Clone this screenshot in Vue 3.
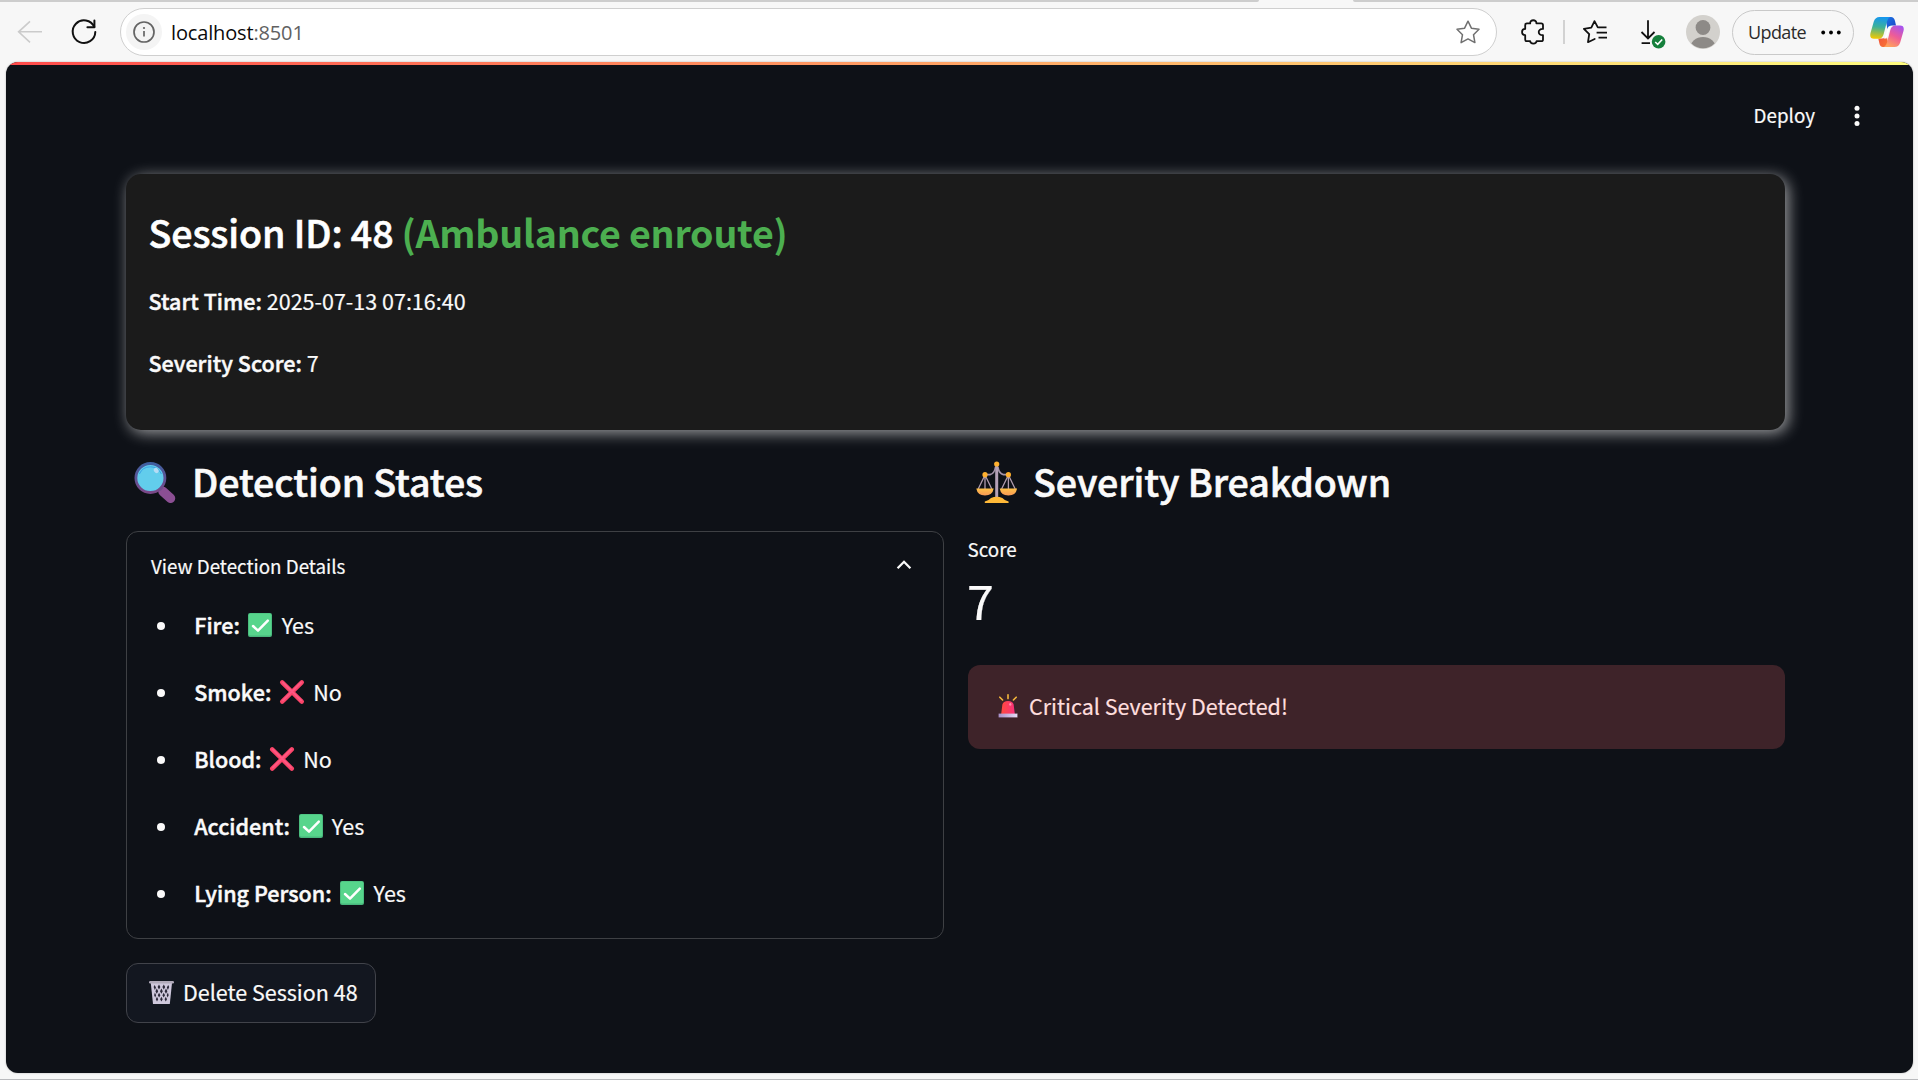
<script setup>
const detections = [
  { label: 'Fire', active: true },
  { label: 'Smoke', active: false },
  { label: 'Blood', active: false },
  { label: 'Accident', active: true },
  { label: 'Lying Person', active: true }
]
</script>

<template>
  <div class="browser">
    <header class="toolbar">
      <div class="tab-edge"><i class="edge left"></i><i class="edge right"></i></div>
      <div class="tools">
        <svg class="ico back" viewBox="0 0 36 36"><path d="M18 7.4 6.6 17.8 18 28.3M6.6 17.8H30" fill="none" stroke="#cbcbcb" stroke-width="1.6" /></svg>
        <svg class="ico reload" viewBox="0 0 36 36"><path d="M28.3 13A11.3 11.3 0 1 0 29.3 18" fill="none" stroke="#111" stroke-width="2" stroke-linecap="round" /><path d="M28.4 6.6v6.6h-7" fill="none" stroke="#111" stroke-width="2" stroke-linecap="round" stroke-linejoin="round" /></svg>
        <div class="address">
          <span class="info">
            <svg width="24" height="24" viewBox="0 0 24 24"><circle cx="12" cy="12" r="10" fill="none" stroke="#646464" stroke-width="1.7" /><path d="M12 11v5.6" stroke="#646464" stroke-width="1.7" /><circle cx="12" cy="8" r="1.1" fill="#646464" /></svg>
          </span>
          <span class="url">localhost<span class="port">:8501</span></span>
          <svg class="ico star" viewBox="0 0 36 36"><path d="M18 7.2 21.4 14.2 29 15.3 23.5 20.7 24.9 28.6 18 24.9 11.1 28.6 12.5 20.7 7 15.3 14.6 14.2Z" fill="none" stroke="#707070" stroke-width="1.5" stroke-linejoin="round" /></svg>
        </div>
        <svg class="ico puzzle" viewBox="0 0 36 36"><path d="M12 9.4H15.2C14.8 5.2 21.7 5.2 21.4 9.4H26.2Q28 9.4 28 11.2V14.9C22.3 14.6 22.3 21.6 28 21.2V25.4Q28 27.2 26.2 27.2H21.6C21.3 30.3 15.4 30.3 15.2 27.2H12Q10.2 27.2 10.2 25.4V21.2C6 21.2 6 14.9 10.2 14.9V11.2Q10.2 9.4 12 9.4Z" fill="none" stroke="#111" stroke-width="1.8" stroke-linejoin="round" /></svg>
        <i class="rule"></i>
        <svg class="ico favs" viewBox="0 0 36 36"><path d="M21.6 13.4H20.8L17.5 7.1 14.3 13.7 6.9 14.9 12.2 20.2 11 28.2 17.7 25" fill="none" stroke="#111" stroke-width="1.8" stroke-linejoin="round" stroke-linecap="round" /><path d="M22 13.4H29.5M19.6 18.6H30M21.5 23.6H30" fill="none" stroke="#111" stroke-width="1.8" /></svg>
        <svg class="ico down" viewBox="0 0 36 36"><path d="M16 6.2V24.2M9.5 18 16 24.4 22.5 18M9.6 29.2H18" fill="none" stroke="#111" stroke-width="1.8" /><circle cx="26.6" cy="27.8" r="6.8" fill="#15803c" /><path d="M23.2 28 25.7 30.3 30.2 25.5" fill="none" stroke="#fff" stroke-width="1.6" /></svg>
        <svg class="avatar" viewBox="0 0 34 34"><defs><clipPath id="avatar-disc"><circle cx="17" cy="17" r="16.3" /></clipPath></defs><circle cx="17" cy="17" r="17" fill="#d3d1cd" /><circle cx="17" cy="12.5" r="7.4" fill="#8d8a87" /><ellipse cx="17" cy="33" rx="12.8" ry="11" fill="#8d8a87" clip-path="url(#avatar-disc)" /></svg>
        <div class="update">
          <span>Update</span>
          <svg width="20" height="5" viewBox="0 0 20 5"><circle cx="2.2" cy="2.5" r="1.9" /><circle cx="10" cy="2.5" r="1.9" /><circle cx="17.8" cy="2.5" r="1.9" /></svg>
        </div>
        <svg class="copilot" viewBox="0 0 34 32">
          <defs>
            <linearGradient id="cp-a" x1=".4" y1="0" x2=".3" y2="1"><stop offset="0" stop-color="#1697ee" /><stop offset=".45" stop-color="#3bb19a" /><stop offset="1" stop-color="#f4c900" /></linearGradient>
            <linearGradient id="cp-b" x1=".8" y1="0" x2=".3" y2="1"><stop offset="0" stop-color="#a653ef" /><stop offset=".5" stop-color="#ee5c97" /><stop offset="1" stop-color="#ffa35c" /></linearGradient>
            <linearGradient id="cp-c" x1="0" y1="0" x2="1" y2="1"><stop offset="0" stop-color="#1c7ce8" /><stop offset="1" stop-color="#1a3fc4" /></linearGradient>
            <linearGradient id="cp-d" x1="0" y1="0" x2="1" y2="1"><stop offset="0" stop-color="#f0503c" /><stop offset="1" stop-color="#fa7a35" /></linearGradient>
          </defs>
          <path d="M15 1H21Q24 1 25 5L26 9.5H22Q18.5 9.5 17.5 13Z" fill="url(#cp-c)" />
          <path d="M19 31H13Q10 31 9.3 27L8.3 22.5H12Q15.5 22.5 16.5 19Z" fill="url(#cp-d)" />
          <path d="M9.5 1H20Q17.8 2 16.8 6L13.7 18Q12.6 22.7 8.5 22.7H4Q-.8 22.7 .5 17L3.8 5.5Q5.3 1 9.5 1Z" fill="url(#cp-a)" />
          <path d="M24.5 31H14Q16.2 30 17.2 26L20.3 14Q21.4 9.5 25.5 9.5H30Q34.8 9.5 33.5 15L30.2 26.5Q28.7 31 24.5 31Z" fill="url(#cp-b)" />
          <path d="M18.6 10.5H20.8Q19.8 11.5 19.2 14L16.6 22.5H13.8Q15 21 15.6 19Z" fill="#fff" />
        </svg>
      </div>
    </header>

    <main class="app">
      <div class="decoration"></div>
      <div class="app-header">
        <span class="deploy">Deploy</span>
        <svg width="24" height="24" viewBox="0 0 24 24" fill="#fafafa"><circle cx="12" cy="4.3" r="2.5" /><circle cx="12" cy="12" r="2.5" /><circle cx="12" cy="19.6" r="2.5" /></svg>
      </div>

      <div class="content">
        <section class="session">
          <h2><span class="sid">Session ID: 48</span><span class="status">(Ambulance enroute)</span></h2>
          <p><strong>Start Time:</strong> 2025-07-13 07:16:40</p>
          <p><strong>Severity Score:</strong> 7</p>
        </section>

        <div class="columns">
          <section class="col">
            <h2>
              <svg class="glass" width="42" height="42" viewBox="0 0 42 42">
                <defs><linearGradient id="rim" x1="0" y1="0" x2="0" y2="1"><stop offset="0" stop-color="#3f5fa0" /><stop offset="1" stop-color="#7a4888" /></linearGradient></defs>
                <path d="M29 30.5 36.5 37.3" stroke="#8b4f93" stroke-width="9.5" stroke-linecap="round" />
                <path d="M25 25.5 28 28.5" stroke="#73508c" stroke-width="4" />
                <circle cx="16.4" cy="17" r="14.5" fill="#62cdec" stroke="url(#rim)" stroke-width="2.8" />
                <path d="M5.4 13A12 12 0 0 1 27.4 13" fill="none" stroke="#3aa3e6" stroke-width="1" />
                <ellipse cx="22.2" cy="9.5" rx="2.2" ry="2.8" fill="#b5dcf4" transform="rotate(-35 22.2 9.5)" />
              </svg>
              <span>Detection States</span>
            </h2>
            <div class="expander">
              <div class="summary">
                <span>View Detection Details</span>
                <svg width="16" height="12" viewBox="0 0 16 12"><path d="M1.6 9.2 8 2.8 14.4 9.2" fill="none" stroke="#fafafa" stroke-width="2.3" /></svg>
              </div>
              <ul>
                <li v-for="d in detections" :key="d.label">
                  <i class="bullet"></i>
                  <strong>{{ d.label }}:</strong>
                  <svg v-if="d.active" class="mark" viewBox="0 0 24 24"><rect width="24" height="24" rx="2" fill="#48b67c" /><rect x=".8" y=".6" width="22.4" height="22" rx="1.6" fill="#57d58c" /><path d="M5 13 10 17.6 19.8 7.6" fill="none" stroke="#fff" stroke-width="2.5" stroke-linecap="round" stroke-linejoin="round" /></svg>
                  <svg v-else class="mark" viewBox="0 0 24 24"><path d="M2.2 2.4 21.8 21.6M21.8 2.4 2.2 21.6" stroke="#fb4468" stroke-width="4.4" stroke-linecap="round" /><path d="M3 2.6 21 20.4M21 2.6 3 20.4" stroke="#ff5683" stroke-width="2" stroke-linecap="round" /></svg>
                  <span>{{ d.active ? 'Yes' : 'No' }}</span>
                </li>
              </ul>
            </div>
            <button class="delete" type="button">
              <svg width="25" height="25" viewBox="0 0 25 25">
                <path d="M1.8 3H23L20.8 24H4Z" fill="#cfc8dc" />
                <g fill="#2b2838">
                  <path d="M5.6 5 7 7.6 5.9 10 4.6 7ZM10 4.6 11.4 7 10 9.4 8.6 7ZM14.8 4.6 16.2 7 14.8 9.4 13.4 7ZM19.2 5 20.2 7 18.9 10 17.8 7.6Z" />
                  <path d="M7.8 8.6 9.2 11.2 7.8 13.8 6.4 11.2ZM12.4 8.6 13.8 11.2 12.4 13.8 11 11.2ZM17 8.6 18.4 11.2 17 13.8 15.6 11.2Z" />
                  <path d="M5.9 12.6 7.1 15.2 6.2 17.6 5.1 15.2ZM10.1 12.8 11.4 15.2 10.1 17.6 8.8 15.2ZM14.7 12.8 16 15.2 14.7 17.6 13.4 15.2ZM18.9 12.6 19.7 15.2 18.6 17.6 17.7 15.2Z" />
                  <path d="M8 16.8 9.2 19.2 8 21.6 6.8 19.2ZM12.4 16.8 13.7 19.2 12.4 21.6 11.1 19.2ZM16.8 16.8 18 19.2 16.8 21.6 15.6 19.2Z" />
                </g>
                <path d="M1.2 2.2H23.8" stroke="#b1aaba" stroke-width="2.4" stroke-linecap="round" />
              </svg>
              <span>Delete Session 48</span>
            </button>
          </section>

          <section class="col">
            <h2>
              <svg class="scales" width="42" height="43" viewBox="0 0 42 43">
                <defs><linearGradient id="pan" x1="0" y1="0" x2="0" y2="1"><stop offset="0" stop-color="#ffc247" /><stop offset="1" stop-color="#f99a55" /></linearGradient></defs>
                <path d="M9 14 2.2 28M9 14V28M9 14 15.8 28M32.4 14 25.6 28M32.4 14V28M32.4 14 39.2 28" fill="none" stroke="#b09cae" stroke-width="1.3" />
                <path d="M9 13.6H14Q18.5 12.5 19.4 6.5H22Q23 12.5 27.4 13.6H32.4" fill="none" stroke="#a392a8" stroke-width="1.6" />
                <path d="M20.7 4V37" stroke="#b5a1b7" stroke-width="3" />
                <path d="M.3 27.4H17.7Q16.5 34.4 9 34.4T.3 27.4ZM23.7 27.4H41.1Q40 34.4 32.4 34.4T23.7 27.4Z" fill="url(#pan)" />
                <path d="M8.8 42V40.4Q13 39.5 15 37Q20.7 34.5 26.4 37Q28.4 39.5 32.6 40.4V42Z" fill="#ffb938" />
                <circle cx="20.7" cy="3" r="2.6" fill="#ffb02e" /><circle cx="9" cy="13.7" r="2.6" fill="#ffb02e" /><circle cx="32.4" cy="13.7" r="2.6" fill="#ffb02e" />
              </svg>
              <span>Severity Breakdown</span>
            </h2>
            <div class="metric-label">Score</div>
            <div class="metric-value">7</div>
            <div class="alert">
              <svg width="20" height="24" viewBox="0 0 20 24">
                <defs><linearGradient id="dome" x1="0" y1="0" x2="1" y2="0"><stop offset="0" stop-color="#ff4a3d" /><stop offset="1" stop-color="#f8307c" /></linearGradient><linearGradient id="foot" x1="0" y1="0" x2="1" y2="0"><stop offset="0" stop-color="#a78fc8" /><stop offset="1" stop-color="#e6dcf6" /></linearGradient></defs>
                <path d="M10 .8V4.6M1.8 3.2 4.6 6M18.2 3.2 15.4 6" stroke="#f6b83c" stroke-width="1.6" stroke-linecap="round" />
                <path d="M3.2 20 4.4 10.5Q5.2 7 10 7T15.6 10.5L16.8 20Z" fill="url(#dome)" />
                <ellipse cx="12.3" cy="10.2" rx="1.1" ry="1.5" fill="#ff8aa4" />
                <path d="M.6 19.6H19.4V23.4H.6Z" fill="url(#foot)" />
              </svg>
              <span>Critical Severity Detected!</span>
            </div>
          </section>
        </div>
      </div>
    </main>
    <footer class="edge-line"></footer>
  </div>
</template>

<style>
body { margin: 0; }
</style>

<style scoped>
.browser {
  width: 1918px;
  height: 1080px;
  display: flex;
  flex-direction: column;
  overflow: hidden;
  background: #f7f7f7;
  font-family: "Noto Sans CJK SC", "Noto Sans", sans-serif;
}
.toolbar { flex: none; height: 62px; display: flex; flex-direction: column; }
.tab-edge { height: 2px; display: flex; justify-content: space-between; }
.edge { height: 2px; background: #cdcdcd; }
.edge.left { width: 1259px; border-bottom-right-radius: 2px; }
.edge.right { width: 565px; border-bottom-left-radius: 2px; }
.tools { height: 60px; display: flex; align-items: center; font-family: "Open Sans", "Noto Sans", sans-serif; }
.ico { width: 36px; height: 36px; flex: none; }
.back { margin-left: 12px; }
.reload { margin-left: 18px; }
.address {
  box-sizing: border-box;
  width: 1377px;
  height: 48px;
  margin-left: 18px;
  border: 1.5px solid #cfcfcf;
  border-radius: 24px;
  background: #fff;
  display: flex;
  align-items: center;
}
.info { width: 36px; height: 36px; margin-left: 5px; border-radius: 50%; background: #f4f4f4; display: flex; align-items: center; justify-content: center; }
.url { flex: 1; margin-left: 9px; font-size: 20px; line-height: 30px; letter-spacing: -0.15px; color: #0b0b0b; padding-top: 1px; }
.port { color: #616161; }
.star { margin-right: 10px; }
.puzzle { margin-left: 18px; }
.rule { width: 2px; height: 24px; margin: 0 12px; background: #d2d2d2; }
.down { margin-left: 19px; }
.avatar { width: 34px; height: 34px; margin-left: 18px; flex: none; }
.update {
  box-sizing: border-box;
  width: 122px;
  height: 45px;
  margin-left: 12px;
  padding: 0 12px 0 15px;
  border: 1.5px solid #c9c9c9;
  border-radius: 23px;
  display: flex;
  align-items: center;
  justify-content: space-between;
  font-size: 18px;
  letter-spacing: -0.6px;
  color: #2b2b2b;
}
.copilot { width: 34px; height: 32px; margin-left: 16px; flex: none; }

.app {
  flex: none;
  height: 1011px;
  margin: 0 5px 0 6px;
  border-radius: 12px;
  overflow: hidden;
  background: #0e1117;
  color: #fafafa;
  box-shadow: 0 0 2px rgba(0, 0, 0, 0.3);
  -webkit-text-stroke: 0.2px currentColor;
}
.decoration { height: 3px; background: linear-gradient(90deg, #ff4b4b, #fffd80); }
.app-header { height: 109px; box-sizing: border-box; padding: 34px 44px 0 0; display: flex; justify-content: flex-end; align-items: flex-start; gap: 30px; }
.app-header svg { margin-top: 5px; }
.deploy { font-size: 18.8px; line-height: 32px; }

.content { margin: 0 128px 0 120px; }
h2, p { margin: 0; }
h2 { font-size: 37.6px; line-height: 60px; font-weight: 500; letter-spacing: -0.1px; -webkit-text-stroke: 0.6px currentColor; }
strong { font-weight: 500; letter-spacing: 0.03px; -webkit-text-stroke: 0.45px currentColor; }
.session {
  box-sizing: border-box;
  height: 256px;
  padding: 28px 22px 0 22.5px;
  border-radius: 15px;
  background: #1b1b1b;
  color: #fff;
  box-shadow: 3px 3px 15px rgba(255, 255, 255, 0.6);
}
.session h2 { display: flex; gap: 8px; }
.status { color: #4caf50; font-weight: 700; letter-spacing: -0.22px; -webkit-text-stroke: 0; }
.session p { margin-top: 21px; font-size: 21.5px; line-height: 36px; color: #fafafa; }
.session p + p { margin-top: 26px; }

.columns { margin-top: 21px; display: grid; grid-template-columns: 818px 817px; gap: 24px; }
.col h2 { display: flex; align-items: flex-start; height: 60px; }
.glass { margin: 10px 16px 0 8px; }
.scales { margin: 10px 15.5px 0 7.5px; }
.expander { box-sizing: border-box; height: 408px; margin-top: 20px; padding: 18px 31px 0 24px; border: 1px solid #3e4044; border-radius: 12px; }
.summary { display: flex; justify-content: space-between; font-size: 18.8px; line-height: 32px; }
.summary svg { margin-top: 9px; }
ul { list-style: none; margin: 25px 0 0 -1px; padding: 0; display: flex; flex-direction: column; gap: 31px; }
li { height: 36px; display: flex; align-items: flex-start; font-size: 21.5px; line-height: 36px; }
.bullet { width: 8px; height: 8px; margin: 15px 29.2px 0 7px; border-radius: 50%; background: #fafafa; }
.mark { width: 24px; height: 24px; margin: 6px 9.3px 0 8.5px; overflow: visible; }
.delete {
  box-sizing: border-box;
  width: 250px;
  height: 60px;
  margin-top: 24px;
  padding: 0 0 2px 22px;
  border: 1px solid #41434a;
  border-radius: 12px;
  background: #131720;
  color: #fafafa;
  font: inherit;
  font-size: 21.5px;
  line-height: 36px;
  display: flex;
  align-items: center;
  gap: 9px;
}
.metric-label { margin: 22px 0 0 -0.5px; font-size: 18.8px; line-height: 32px; }
.metric-value { margin: 4px 0 36px -1px; font-size: 48.3px; line-height: 60px; }
.alert {
  box-sizing: border-box;
  height: 84px;
  border-radius: 12px;
  background: #3e2329;
  color: #ffdede;
  display: flex;
  align-items: center;
  gap: 11px;
  padding: 0 0 2px 30px;
  font-size: 21.5px;
  line-height: 36px;
}
.edge-line { margin-top: 6px; height: 1px; background: #b9babd; }
</style>
